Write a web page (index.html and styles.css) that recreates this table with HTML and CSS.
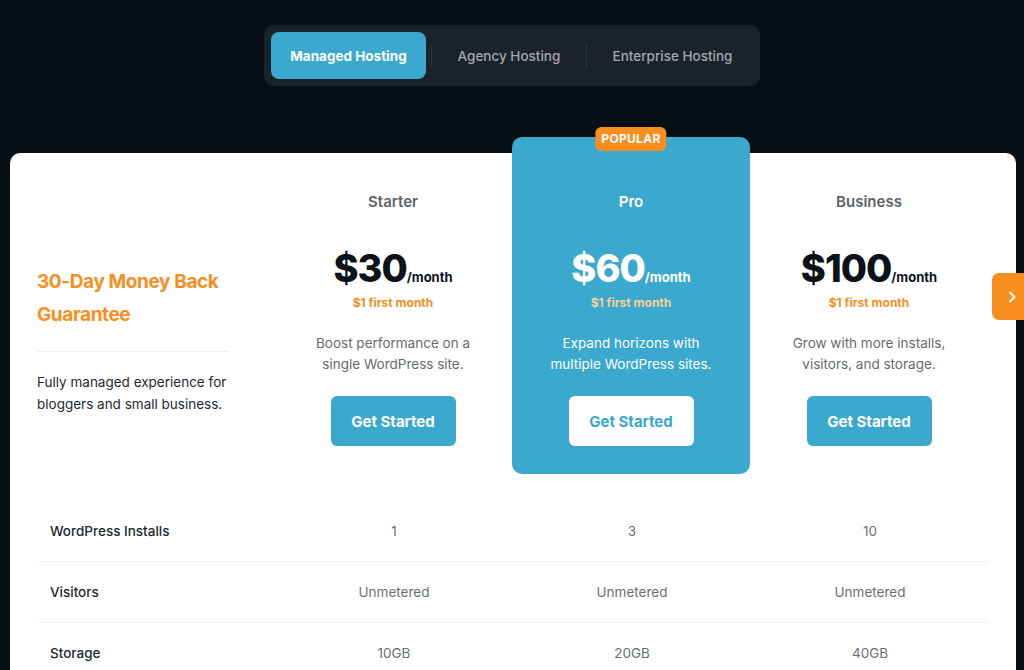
FILE: index.html
```html
<!DOCTYPE html>
<html lang="en">
<head>
<meta charset="utf-8">
<title>Pricing</title>
<link rel="stylesheet" href="styles.css">
</head>
<body>
<div class="page">
  <nav class="tabs">
    <span class="tab active">Managed Hosting</span>
    <span class="sep"></span>
    <span class="tab">Agency Hosting</span>
    <span class="sep"></span>
    <span class="tab">Enterprise Hosting</span>
  </nav>

  <section class="card">
    <div class="plans">
      <div class="intro">
        <h2 class="guarantee">30-Day Money Back Guarantee</h2>
        <hr class="intro-line">
        <p class="intro-text">Fully managed experience for bloggers and small business.</p>
      </div>

      <div class="plan">
        <h3 class="plan-name">Starter</h3>
        <div class="price"><span class="amount">$30</span><span class="per">/month</span></div>
        <div class="promo">$1 first month</div>
        <p class="desc">Boost performance on a single WordPress site.</p>
        <a class="btn">Get Started</a>
      </div>

      <div class="plan featured">
        <span class="badge">POPULAR</span>
        <h3 class="plan-name">Pro</h3>
        <div class="price"><span class="amount">$60</span><span class="per">/month</span></div>
        <div class="promo">$1 first month</div>
        <p class="desc">Expand horizons with multiple WordPress sites.</p>
        <a class="btn">Get Started</a>
      </div>

      <div class="plan">
        <h3 class="plan-name">Business</h3>
        <div class="price"><span class="amount">$100</span><span class="per">/month</span></div>
        <div class="promo">$1 first month</div>
        <p class="desc">Grow with more installs, visitors, and storage.</p>
        <a class="btn">Get Started</a>
      </div>
    </div>

    <div class="features">
      <div class="row">
        <div class="label">WordPress Installs</div>
        <div class="val">1</div>
        <div class="val">3</div>
        <div class="val">10</div>
      </div>
      <div class="row">
        <div class="label">Visitors</div>
        <div class="val">Unmetered</div>
        <div class="val">Unmetered</div>
        <div class="val">Unmetered</div>
      </div>
      <div class="row">
        <div class="label">Storage</div>
        <div class="val">10GB</div>
        <div class="val">20GB</div>
        <div class="val">40GB</div>
      </div>
    </div>
  </section>

  <button class="next" aria-label="Next">
    <svg width="10" height="14" viewBox="0 0 10 14"><path d="M3 2.5 L7.5 7 L3 11.5" fill="none" stroke="#fff" stroke-width="2" stroke-linecap="round" stroke-linejoin="round"/></svg>
  </button>
</div>
</body>
</html>
```

FILE: styles.css
```css
* { box-sizing: border-box; }

html, body {
  margin: 0;
  padding: 0;
  background: #060f16;
  overflow: hidden;
}

body {
  font-family: Inter, "Noto Sans", "Liberation Sans", sans-serif;
  color: #1d2731;
}

.page {
  position: relative;
  height: 670px;
  padding-top: 25px;
}

/* Tabs */
.tabs {
  display: flex;
  align-items: center;
  width: 496px;
  margin: 0 auto;
  padding: 7px;
  background: #1b2229;
  border-radius: 10px;
}

.tab {
  height: 47px;
  display: flex;
  align-items: center;
  justify-content: center;
  font-size: 13.5px;
  font-weight: 500;
  color: #a3a8ad;
  border-radius: 8px;
  flex: 1 1 auto;
}

.tab.active {
  flex: 0 0 155px;
  background: #3ba9cd;
  color: #fff;
  font-weight: 700;
}

.sep {
  width: 1px;
  height: 24px;
  background: #2e363d;
  margin: 0 5px;
}

/* Card */
.card {
  margin: 67px 8px 0 10px;
  background: #fff;
  border-radius: 10px;
  padding: 0 28px 0 26px;
  height: 560px;
}

.plans {
  display: grid;
  grid-template-columns: repeat(4, 238px);
}

.intro {
  padding: 112px 24px 0 1px;
}

.guarantee {
  margin: 0;
  font-size: 19px;
  line-height: 33px;
  font-weight: 700;
  color: #f78e1e;
  letter-spacing: -0.4px;
}

.intro-line {
  width: 191px;
  margin: 20px 0 19px;
  border: 0;
  height: 1px;
  background: #eceef0;
}

.intro-text {
  margin: 0;
  font-size: 13.5px;
  line-height: 22px;
  color: #1f2933;
}

.plan {
  position: relative;
  display: flex;
  flex-direction: column;
  align-items: center;
  text-align: center;
  padding: 39px 20px 28px;
}

.plan.featured {
  margin-top: -16px;
  padding-top: 55px;
  background: #3ba9cd;
  border-radius: 10px;
}

.badge {
  position: absolute;
  top: -10px;
  left: 50%;
  transform: translateX(-50%);
  background: #f78e1e;
  color: #fff;
  font-size: 12px;
  font-weight: 700;
  letter-spacing: 0.3px;
  line-height: 24px;
  padding: 0 6px;
  border-radius: 6px;
}

.plan-name {
  margin: 0;
  font-size: 15px;
  line-height: 20px;
  font-weight: 600;
  color: #5d6369;
}

.featured .plan-name { color: #fff; }

.price {
  margin-top: 32px;
  display: flex;
  align-items: baseline;
  height: 48px;
}

.amount {
  font-size: 38px;
  line-height: 48px;
  font-weight: 800;
  letter-spacing: -1px;
  color: #0b1218;
}

.per {
  font-size: 13px;
  font-weight: 700;
  color: #0b1218;
}

.featured .amount,
.featured .per { color: #fff; }

.promo {
  margin-top: 3px;
  font-size: 12px;
  line-height: 16px;
  font-weight: 700;
  color: #f78e1e;
}

.featured .promo { color: #f7cf9c; }

.desc {
  margin: 22px 0 0;
  font-size: 13.5px;
  line-height: 21px;
  color: #666b70;
  max-width: 180px;
}

.featured .desc { color: #fff; }

.btn {
  margin-top: 21px;
  width: 125px;
  height: 50px;
  display: flex;
  align-items: center;
  justify-content: center;
  background: #3ba9cd;
  color: #fff;
  font-size: 15px;
  font-weight: 700;
  border-radius: 6px;
}

.featured .btn {
  background: #fff;
  color: #3ba9cd;
}

/* Feature table */
.features {
  margin: 27px 0 0 1px;
}

.row {
  display: grid;
  grid-template-columns: repeat(4, 238px);
  height: 61px;
  align-items: center;
  border-bottom: 1px solid #eeeff1;
  font-size: 13.5px;
}

.label {
  padding-left: 13px;
  font-weight: 500;
  color: #1d2731;
}

.val {
  text-align: center;
  color: #6a6f74;
}

/* Next arrow */
.next {
  position: absolute;
  top: 273px;
  right: -8px;
  width: 40px;
  height: 47px;
  border: 0;
  padding: 0;
  background: #f78e1e;
  border-radius: 7px;
  display: flex;
  align-items: center;
  justify-content: center;
}
```
